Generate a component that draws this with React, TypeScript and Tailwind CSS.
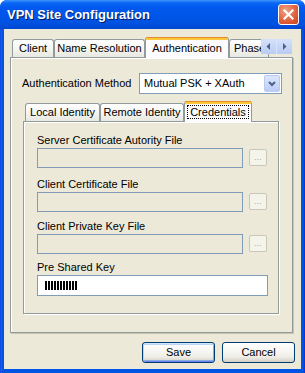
import React from "react";

function Tab({
  label,
  selected,
  width,
  focus,
  tall,
}: {
  label: string;
  selected?: boolean;
  width: number;
  focus?: boolean;
  tall: number;
}) {
  if (selected) {
    return (
      <div
        className="relative z-10 -mb-px -mx-[2px] flex flex-col rounded-t-[3px] border-x border-[#919B9C] bg-[#FCFCFE]"
        style={{ width: width + 4, height: tall + 1 }}
      >
        <div className="h-[1px] rounded-t-[3px] bg-[#E68B2C]" />
        <div className="h-[2px] bg-[#FFC73C]" />
        <div className="flex flex-1 items-center justify-center pb-[2px]">
          <span
            className={
              focus
                ? "border border-dotted border-black px-[2px] leading-[12px]"
                : "leading-[13px]"
            }
          >
            {label}
          </span>
        </div>
      </div>
    );
  }
  return (
    <div
      className="flex items-center justify-center rounded-t-[3px] border-x border-t border-[#919B9C] bg-[linear-gradient(to_bottom,#FFFFFF,#F3F3EF_60%,#E8E8E1)] leading-[13px]"
      style={{ width, height: tall - 2 }}
    >
      <span className="whitespace-nowrap">{label}</span>
    </div>
  );
}

function FileRow({ label, mt }: { label: string; mt: string }) {
  return (
    <div className={mt}>
      <div className="h-[14px] leading-[14px]">{label}</div>
      <div className="mt-[1px] flex items-start">
        <div className="h-[20px] w-[206px] border border-[#7F9DB9] bg-[#ECE9D8]" />
        <div className="ml-[6px] mt-[1px] flex h-[17px] w-[18px] items-center justify-center rounded-[2px] border border-[#C9C7BA] bg-[#F5F4EA] text-[9px] leading-[9px] text-[#ACA899]">
          ...
        </div>
      </div>
    </div>
  );
}

export default function App() {
  return (
    <div className="h-[373px] w-[305px] bg-white font-['Liberation_Sans',Arial,sans-serif] text-[11px] text-black">
      <div className="flex h-full w-full flex-col overflow-hidden rounded-t-[7px] bg-[linear-gradient(to_right,#0831D9,#166AEE_1px,#0855DD_2px,#0054E3_3px,#0054E3_302px,#0855DD_303px,#0831D9)]">
        {/* Title bar */}
        <div className="flex h-[29px] shrink-0 items-center bg-[linear-gradient(to_bottom,#3D95FF_0px,#0A66F3_3px,#0058EE_8px,#0055E6_18px,#0051DF_24px,#0046D0_29px)] pl-[7px] pr-[6px]">
          <span className="text-[13px] font-bold leading-[15px] text-white [text-shadow:1px_1px_0_#0A1864]">
            VPN Site Configuration
          </span>
          <div className="ml-auto flex h-[21px] w-[21px] items-center justify-center rounded-[3px] border border-white bg-[radial-gradient(circle_at_35%_30%,#F0A487,#E4623E_55%,#C8401C)]">
            <svg width="11" height="11" viewBox="0 0 11 11">
              <path
                d="M1.5 1.5 L9.5 9.5 M9.5 1.5 L1.5 9.5"
                stroke="white"
                strokeWidth="2.2"
                strokeLinecap="square"
              />
            </svg>
          </div>
        </div>

        {/* Body */}
        <div className="mx-[4px] mb-[4px] flex flex-1 flex-col bg-[#ECE9D8] pl-[6px] pr-[8px] pt-[8px]">
          {/* Outer tab strip */}
          <div className="relative flex h-[20px] items-end pl-[2px]">
            <Tab label="Client" width={42} tall={20} />
            <Tab label="Name Resolution" width={91} tall={20} />
            <div className="w-[2px]" />
            <Tab label="Authentication" width={80} tall={20} selected />
            <div className="w-[2px]" />
            <div className="h-[18px] w-[40px] overflow-hidden rounded-t-[3px] border-x border-t border-[#919B9C] bg-[linear-gradient(to_bottom,#FFFFFF,#F3F3EF_60%,#E8E8E1)] pl-[4px] leading-[16px]">
              Phase
            </div>
            <div className="absolute right-[1px] top-[2px] flex h-[15px]">
              <div className="flex w-[16px] items-center justify-center border-r border-[#D8E3F8] bg-[linear-gradient(to_bottom,#D5E1FB,#BACCF4)]">
                <svg width="5" height="7" viewBox="0 0 5 7">
                  <path d="M4 0 L4 7 L0.5 3.5 Z" fill="#4D6185" />
                </svg>
              </div>
              <div className="flex w-[15px] items-center justify-center bg-[linear-gradient(to_bottom,#D5E1FB,#BACCF4)]">
                <svg width="5" height="7" viewBox="0 0 5 7">
                  <path d="M1 0 L1 7 L4.5 3.5 Z" fill="#4D6185" />
                </svg>
              </div>
            </div>
          </div>

          {/* Outer panel */}
          <div className="flex h-[276px] w-[283px] flex-col border border-[#919B9C] bg-[#ECE9D8] pl-[11px] pr-[10px] pt-[15px] shadow-[inset_1px_1px_0_#fff,1px_1px_0_#C7C5B2]">
            <div className="flex h-[21px] items-center justify-between">
              <span className="leading-[13px]">Authentication Method</span>
              <div className="flex h-[21px] w-[143px] items-center border border-[#7F9DB9] bg-white p-[1px]">
                <span className="flex-1 pl-[3px] leading-[13px]">
                  Mutual PSK + XAuth
                </span>
                <div className="flex h-[17px] w-[16px] items-center justify-center rounded-[2px] border border-[#B9CBF3] bg-[linear-gradient(to_bottom,#DCE6FD,#BCCDF7)]">
                  <svg width="8" height="6" viewBox="0 0 8 6">
                    <path
                      d="M1 1 L4 4 L7 1"
                      stroke="#4D6185"
                      strokeWidth="2"
                      fill="none"
                    />
                  </svg>
                </div>
              </div>
            </div>

            {/* Inner tab control */}
            <div className="ml-[1px] mt-[7px] w-[256px]">
              <div className="flex h-[20px] items-end pl-[2px]">
                <Tab label="Local Identity" width={75} tall={20} />
                <Tab label="Remote Identity" width={84} tall={20} />
                <div className="w-[2px]" />
                <Tab label="Credentials" width={64} tall={20} selected focus />
              </div>
              <div className="h-[193px] border border-[#919B9C] bg-[#ECE9D8] pl-[13px] pt-[11px] shadow-[inset_1px_1px_0_#fff,1px_1px_0_#fff]">
                <FileRow label="Server Certificate Autority File" mt="" />
                <FileRow label="Client Certificate File" mt="mt-[9px]" />
                <FileRow label="Client Private Key File" mt="mt-[7px]" />
                <div className="mt-[6px]">
                  <div className="h-[14px] leading-[14px]">Pre Shared Key</div>
                  <div className="mt-[1px] flex h-[21px] w-[231px] items-center border border-[#7F9DB9] bg-white pl-[7px]">
                    <div className="flex gap-[1px]">
                      {Array.from({ length: 11 }).map((_, i) => (
                        <div key={i} className="h-[9px] w-[2px] bg-black" />
                      ))}
                    </div>
                  </div>
                </div>
              </div>
            </div>
          </div>

          {/* Buttons */}
          <div className="mt-[9px] flex justify-end gap-[7px] pr-[-2px]">
            <div className="flex h-[21px] w-[73px] items-center justify-center rounded-[3px] border border-[#003C74] bg-[linear-gradient(to_bottom,#FFFFFF,#F0F0EA_70%,#D6D0C5)] shadow-[inset_0_1px_0_#CEE7FF,inset_1px_0_0_#BCD4F6,inset_-1px_0_0_#89ADE4,inset_0_-1px_0_#6982EE,inset_0_2px_0_#BCD4F6,inset_0_-2px_0_#89ADE4]">
              Save
            </div>
            <div className="mr-[-2px] flex h-[21px] w-[73px] items-center justify-center rounded-[3px] border border-[#003C74] bg-[linear-gradient(to_bottom,#FFFFFF,#F0F0EA_70%,#D6D0C5)]">
              Cancel
            </div>
          </div>
        </div>
      </div>
    </div>
  );
}
